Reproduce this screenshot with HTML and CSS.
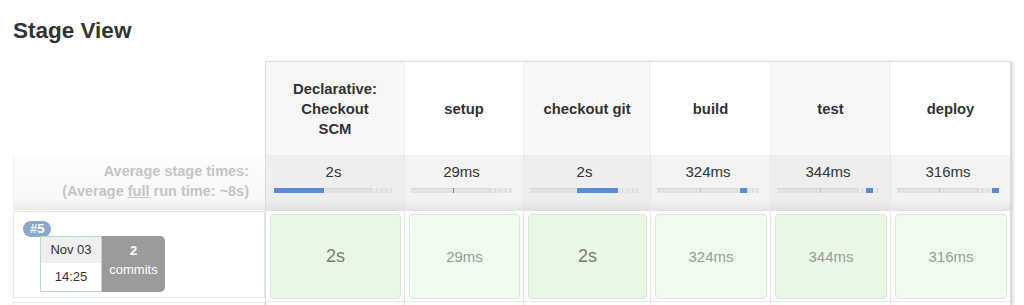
FILE: index.html
```html
<!DOCTYPE html>
<html>
<head>
<meta charset="utf-8">
<link rel="stylesheet" href="styles.css">
</head>
<body>
<h2 class="title">Stage View</h2>
<div class="stage-view">
  <div class="left-col">
    <div class="left-head"></div>
    <div class="left-avg">
      <div>Average stage times:</div>
      <div>(Average <u>full</u> run time: ~8s)</div>
    </div>
    <div class="left-build">
      <span class="badge">#5</span>
      <div class="build-info">
        <div class="date">
          <div class="date-day">Nov 03</div>
          <div class="date-time">14:25</div>
        </div>
        <div class="commits">
          <div class="commits-num">2</div>
          <div>commits</div>
        </div>
      </div>
    </div>
    <div class="left-next"></div>
  </div>
  <div class="stage-table">
    <div class="head odd">Declarative:<br>Checkout<br>SCM</div>
    <div class="head">setup</div>
    <div class="head odd">checkout git</div>
    <div class="head">build</div>
    <div class="head odd">test</div>
    <div class="head">deploy</div>

    <div class="avg odd first">
      <div class="avg-val">2s</div>
      <div class="bar"><span class="fill" style="left:0;width:42%"></span><span class="ends"></span></div>
    </div>
    <div class="avg">
      <div class="avg-val">29ms</div>
      <div class="bar"><span class="fill" style="left:42%;width:1px"></span><span class="ends"></span></div>
    </div>
    <div class="avg odd">
      <div class="avg-val">2s</div>
      <div class="bar"><span class="fill" style="left:43%;width:38%"></span><span class="ends"></span></div>
    </div>
    <div class="avg">
      <div class="avg-val">324ms</div>
      <div class="bar"><span class="tick" style="left:42%"></span><span class="fill" style="left:81%;width:7%"></span><span class="ends"></span></div>
    </div>
    <div class="avg odd">
      <div class="avg-val">344ms</div>
      <div class="bar"><span class="tick" style="left:42%"></span><span class="fill" style="left:87%;width:7%"></span><span class="ends"></span></div>
    </div>
    <div class="avg">
      <div class="avg-val">316ms</div>
      <div class="bar"><span class="tick" style="left:41%"></span><span class="fill" style="left:93%;width:7%"></span><span class="ends"></span></div>
    </div>

    <div class="build"><div class="cell dark big">2s</div></div>
    <div class="build"><div class="cell">29ms</div></div>
    <div class="build"><div class="cell dark big">2s</div></div>
    <div class="build"><div class="cell">324ms</div></div>
    <div class="build"><div class="cell dark">344ms</div></div>
    <div class="build"><div class="cell">316ms</div></div>

    <div class="next"></div>
    <div class="next"></div>
    <div class="next"></div>
    <div class="next"></div>
    <div class="next"></div>
    <div class="next"></div>
  </div>
</div>
</body>
</html>
```
FILE: styles.css
```css
html, body {
  margin: 0;
  padding: 0;
  background: #fff;
  font-family: "Liberation Sans", Arial, sans-serif;
  color: #333;
}

.title {
  margin: 0;
  padding: 19px 0 0 13px;
  height: 61px;
  box-sizing: border-box;
  font-size: 22.5px;
  line-height: 24px;
  font-weight: bold;
  color: #333;
}

.stage-view {
  display: flex;
  padding-left: 13px;
}

.left-col {
  width: 252px;
  display: flex;
  flex-direction: column;
}

.left-head {
  height: 94px;
}

.left-avg {
  height: 55px;
  box-sizing: border-box;
  padding: 6px 16px 0 0;
  text-align: right;
  font-size: 14.5px;
  line-height: 20px;
  font-weight: bold;
  color: #c4c4c4;
  background: linear-gradient(#fdfdfd, #f8f8f8 80%, #ebebeb);
  border-left: 1px solid #f0f0f0;
}

.left-avg u {
  text-decoration: underline;
}

.left-build {
  margin-top: 1px;
  height: 87px;
  box-sizing: border-box;
  border: 1px solid #e8e8e8;
  padding: 9px 0 0 9px;
}

.badge {
  display: inline-block;
  height: 16px;
  line-height: 16px;
  padding: 0 7px;
  border-radius: 8px;
  background: #88a8cf;
  color: #fff;
  font-size: 13px;
  font-weight: bold;
  vertical-align: top;
}

.build-info {
  display: flex;
  margin: -3px 0 0 17px;
}

.date {
  width: 62px;
  height: 56px;
  box-sizing: border-box;
  border: 1px solid #bdd9bf;
  display: flex;
  flex-direction: column;
  font-size: 13px;
  text-align: center;
  color: #333;
}

.date-day {
  height: 27px;
  line-height: 26px;
  background: #efefef;
}

.date-time {
  flex: 1;
  line-height: 28px;
  background: #fff;
}

.commits {
  width: 63px;
  height: 56px;
  background: #9b9b9b;
  border-radius: 0 5px 5px 0;
  color: #fff;
  text-align: center;
  font-size: 13px;
  line-height: 19px;
  padding-top: 5px;
  box-sizing: border-box;
}

.commits-num {
  font-weight: bold;
}

.left-next {
  margin-top: 4px;
  height: 80px;
  border: 1px solid #e8e8e8;
}

.stage-table {
  display: grid;
  grid-template-columns: 138px 119px 127px 120px 120px 120px;
  grid-template-rows: 93px 56px 90px 80px;
  border: 1px solid #dcdcdc;
  box-shadow: 2px 1px 3px rgba(0, 0, 0, 0.18);
  align-self: flex-start;
}

.head {
  display: flex;
  align-items: center;
  justify-content: center;
  text-align: center;
  font-size: 14.8px;
  line-height: 20px;
  font-weight: bold;
  color: #333;
  background: #fff;
  border-left: 1px solid #f0f0f0;
  padding-top: 1px;
}

.head.odd {
  background: #f7f7f7;
}

.head:first-child {
  border-left: none;
}

.avg {
  background: linear-gradient(#f3f3f3, #f3f3f3 80%, #e4e4e4);
  border-left: 1px solid #e8e8e8;
  padding: 7px 11px 0 6px;
  box-sizing: border-box;
}

.avg.odd {
  background: linear-gradient(#eeeeee, #eeeeee 80%, #e0e0e0);
}

.avg.first {
  border-left: none;
  padding-left: 8px;
}

.avg-val {
  text-align: center;
  font-size: 15px;
  line-height: 20px;
  color: #333;
}

.bar {
  position: relative;
  margin-top: 6px;
  height: 5px;
  background: #e2e2e2;
  box-shadow: inset 0 1px 0 #d6d6d6;
}

.bar .ends {
  position: absolute;
  right: 0;
  top: 0;
  width: 22px;
  height: 5px;
  background: repeating-linear-gradient(90deg, #d6d6d6 0 1px, #e8e8e8 1px 5px);
}

.bar .fill {
  position: absolute;
  top: 0;
  height: 5px;
  background: #5b8bd6;
  z-index: 1;
}

.bar .tick {
  position: absolute;
  top: 0;
  width: 1px;
  height: 5px;
  background: #c4c4c4;
}

.build {
  border-left: 1px solid #e6e6e6;
  padding: 3px 3px 2px 4px;
  background: #fff;
  box-sizing: border-box;
}

.build:nth-child(13) {
  border-left: none;
}

.cell {
  height: 100%;
  box-sizing: border-box;
  border: 1px solid #d8e6d4;
  border-radius: 4px;
  background: #f0fdee;
  display: flex;
  align-items: center;
  justify-content: center;
  font-size: 15px;
  color: #9a9a9a;
}

.cell.dark {
  background: #e9f8e5;
}

.cell.big {
  font-size: 18px;
  color: #7a7a7a;
}

.next {
  border-left: 1px solid #e6e6e6;
  border-top: 1px solid #e6e6e6;
  background: #fff;
}

.next:nth-child(19) {
  border-left: none;
}
```
